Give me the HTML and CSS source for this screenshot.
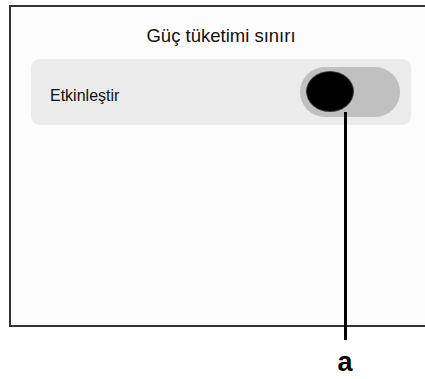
FILE: index.html
```html
<!DOCTYPE html>
<html lang="tr">

<head>
    <meta charset="UTF-8">
    <meta name="viewport" content="width=device-width, initial-scale=1.0">
    <title>Güç tüketimi sınırı</title>
    <link rel="stylesheet" href="styles.css">
</head>

<body>
    <div class="screen">
        <div class="panel">
            <h1 class="title">Güç tüketimi sınırı</h1>
            <div class="row">
                <span class="rowLabel">Etkinleştir</span>
                <div class="toggle">
                    <div class="knob"></div>
                </div>
            </div>
        </div>
    </div>

    <div class="callout">
        <div class="calloutLine"></div>
        <div class="calloutLetter">a</div>
    </div>
</body>

</html>
```

FILE: styles.css
```css
html,
body {
    margin: 0;
    padding: 0;
    background: #ffffff;
    overflow: hidden;
}

body {
    font-family: 'Liberation Sans', Arial, sans-serif;
    color: #111111;
    position: relative;
    width: 425px;
    height: 379px;
}

.screen {
    margin: 5px 0 0 9px;
    width: 414px;
    height: 318px;
    background: #fcfcfc;
    border-top: 2px solid #333333;
    border-left: 2px solid #333333;
    border-bottom: 2px solid #333333;
}

.panel {
    width: 380px;
    margin-left: 20px;
    padding-top: 19px;
}

.title {
    margin: 0 0 13px;
    font-size: 18.5px;
    line-height: 20px;
    font-weight: normal;
    text-align: center;
}

.row {
    display: flex;
    align-items: center;
    justify-content: space-between;
    height: 66px;
    padding: 0 11px 0 19px;
    background: #ebebeb;
    border-radius: 9px;
}

.rowLabel {
    font-size: 16px;
    line-height: 18px;
    padding-top: 8px;
}

.toggle {
    width: 100px;
    height: 50px;
    border-radius: 25px;
    background: #c0c0c0;
    padding: 5px 0 0 7px;
    box-sizing: border-box;
}

.knob {
    width: 46px;
    height: 39px;
    border-radius: 50%;
    background: #000000;
    box-shadow: 0 0 0 1px #3a3a3a;
}

.callout {
    position: absolute;
    left: 332px;
    top: 112px;
    width: 26px;
    display: flex;
    flex-direction: column;
    align-items: center;
}

.calloutLine {
    width: 3px;
    height: 228px;
    background: #000000;
}

.calloutLetter {
    margin-top: 8px;
    font-size: 27px;
    line-height: 28px;
    font-weight: bold;
    color: #000000;
}
```
